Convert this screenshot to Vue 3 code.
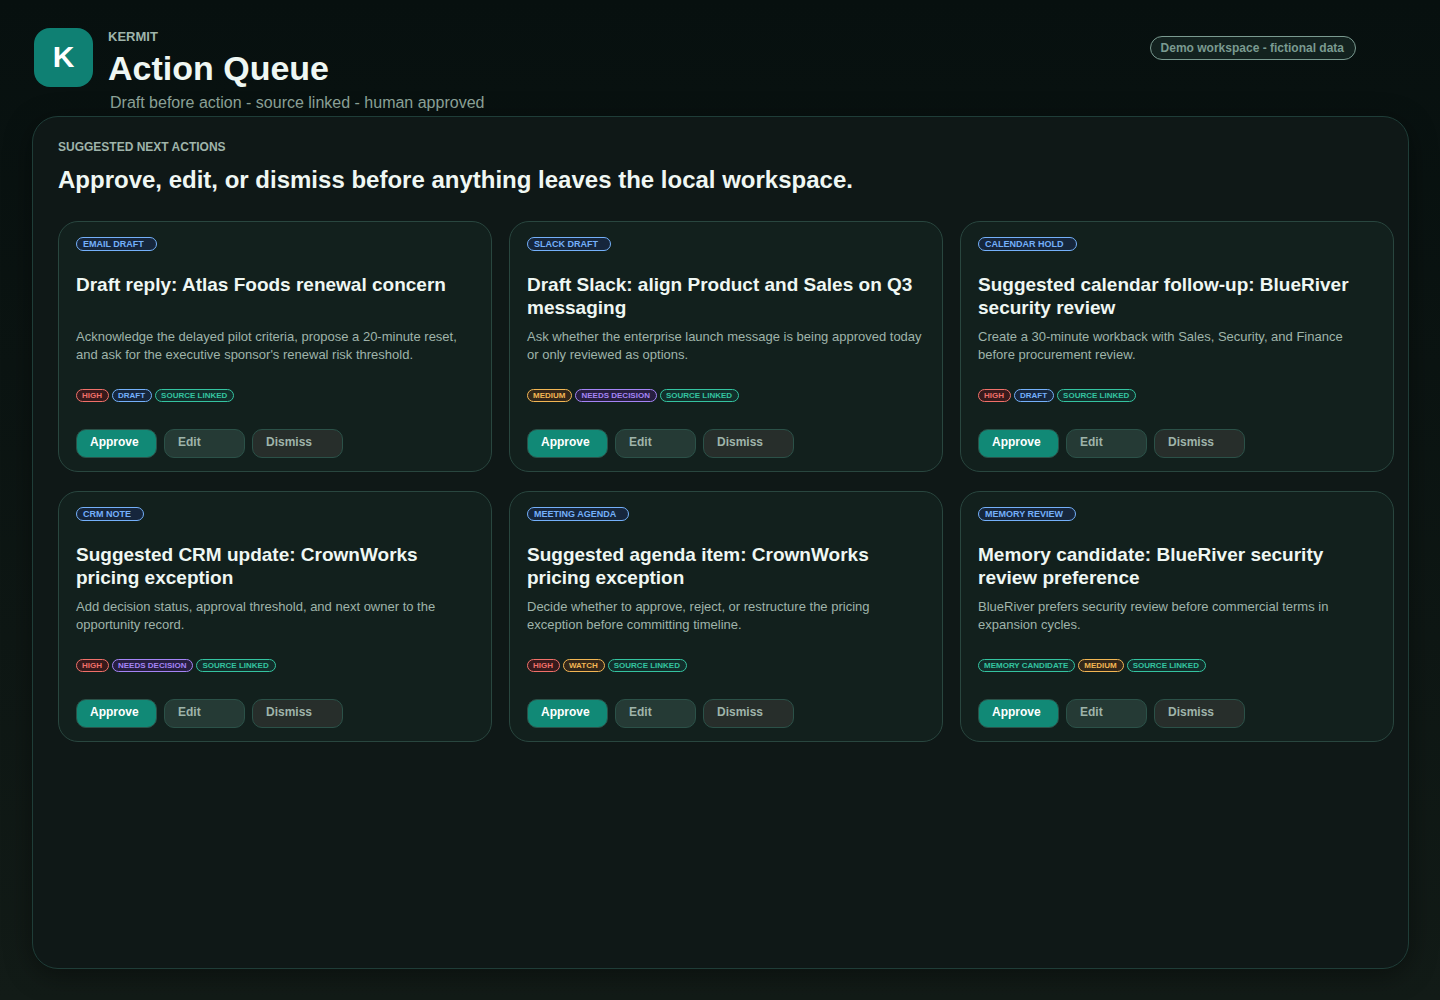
<template>
  <div class="page">
    <!-- Header -->
    <header class="header">
      <div class="logo">K</div>
      <div class="heading">
        <p class="brand">KERMIT</p>
        <h1 class="title">Action Queue</h1>
        <p class="subtitle">Draft before action - source linked - human approved</p>
      </div>
      <span class="workspace-badge">Demo workspace - fictional data</span>
    </header>

    <!-- Queue -->
    <main class="panel">
      <p class="eyebrow">SUGGESTED NEXT ACTIONS</p>
      <h2 class="panel-title">Approve, edit, or dismiss before anything leaves the local workspace.</h2>

      <div class="grid">
        <article v-for="action in actions" :key="action.title" class="card">
          <span class="kind">{{ action.kind }}</span>
          <h3 class="card-title">{{ action.title }}</h3>
          <p class="card-text">{{ action.text }}</p>
          <div class="tags">
            <span v-for="tag in action.tags" :key="tag" class="tag" :class="tagColors[tag]">{{ tag }}</span>
          </div>
          <div class="buttons">
            <button type="button" class="btn approve">Approve</button>
            <button type="button" class="btn edit">Edit</button>
            <button type="button" class="btn dismiss">Dismiss</button>
          </div>
        </article>
      </div>
    </main>
  </div>
</template>

<script setup>
const tagColors = {
  'HIGH': 'red',
  'DRAFT': 'blue',
  'SOURCE LINKED': 'green',
  'MEMORY CANDIDATE': 'green',
  'MEDIUM': 'amber',
  'WATCH': 'amber',
  'NEEDS DECISION': 'purple'
}

const actions = [
  {
    kind: 'EMAIL DRAFT',
    title: 'Draft reply: Atlas Foods renewal concern',
    text: "Acknowledge the delayed pilot criteria, propose a 20-minute reset, and ask for the executive sponsor's renewal risk threshold.",
    tags: ['HIGH', 'DRAFT', 'SOURCE LINKED']
  },
  {
    kind: 'SLACK DRAFT',
    title: 'Draft Slack: align Product and Sales on Q3 messaging',
    text: 'Ask whether the enterprise launch message is being approved today or only reviewed as options.',
    tags: ['MEDIUM', 'NEEDS DECISION', 'SOURCE LINKED']
  },
  {
    kind: 'CALENDAR HOLD',
    title: 'Suggested calendar follow-up: BlueRiver security review',
    text: 'Create a 30-minute workback with Sales, Security, and Finance before procurement review.',
    tags: ['HIGH', 'DRAFT', 'SOURCE LINKED']
  },
  {
    kind: 'CRM NOTE',
    title: 'Suggested CRM update: CrownWorks pricing exception',
    text: 'Add decision status, approval threshold, and next owner to the opportunity record.',
    tags: ['HIGH', 'NEEDS DECISION', 'SOURCE LINKED']
  },
  {
    kind: 'MEETING AGENDA',
    title: 'Suggested agenda item: CrownWorks pricing exception',
    text: 'Decide whether to approve, reject, or restructure the pricing exception before committing timeline.',
    tags: ['HIGH', 'WATCH', 'SOURCE LINKED']
  },
  {
    kind: 'MEMORY REVIEW',
    title: 'Memory candidate: BlueRiver security review preference',
    text: 'BlueRiver prefers security review before commercial terms in expansion cycles.',
    tags: ['MEMORY CANDIDATE', 'MEDIUM', 'SOURCE LINKED']
  }
]
</script>

<style>
body {
  margin: 0;
  background: #121b17;
}
</style>

<style scoped>
.page {
  min-height: 100vh;
  box-sizing: border-box;
  display: flex;
  flex-direction: column;
  padding: 28px 31px 31px 32px;
  background: linear-gradient(180deg, #07100f 0%, #121b17 100%);
  color: #eff7f3;
  font-family: "Liberation Sans", Arial, sans-serif;
}

h1,
h2,
h3,
p {
  margin: 0;
}

/* Header */
.header {
  display: flex;
  align-items: flex-start;
  padding: 0 53px 0 2px;
  margin-bottom: 3px;
}

.logo {
  width: 59px;
  height: 59px;
  border-radius: 16px;
  background: #0f8073;
  color: #fff;
  font-size: 30px;
  font-weight: 700;
  line-height: 58px;
  text-align: center;
  margin-right: 15px;
}

.heading {
  flex: 1;
}

.brand {
  font-size: 13px;
  line-height: 18px;
  font-weight: 700;
  color: #9fb4aa;
}

.title {
  margin-bottom: 3px;
  font-size: 34px;
  line-height: 44px;
  font-weight: 700;
}

.subtitle {
  font-size: 16px;
  line-height: 20px;
  padding-left: 2px;
  color: #8fa59b;
}

.workspace-badge {
  margin-top: 8px;
  padding: 0 11px 0 10px;
  border: 1px solid #7a9a90;
  border-radius: 12px;
  background: #13221f;
  color: #7a9a90;
  font-size: 12px;
  line-height: 22px;
  font-weight: 700;
}

/* Panel */
.panel {
  flex: 1;
  padding: 20px 14px 25px 25px;
  border: 1px solid #1f3d38;
  border-radius: 26px;
  background: #0f1817;
  box-shadow: 0 6px 28px rgba(0, 0, 0, 0.4);
}

.eyebrow {
  font-size: 12px;
  line-height: 20px;
  font-weight: 700;
  color: #9fb4aa;
}

.panel-title {
  margin: 8px 0 26px;
  font-size: 24px;
  line-height: 30px;
  font-weight: 700;
}

.grid {
  display: grid;
  grid-template-columns: repeat(3, 1fr);
  gap: 19px 17px;
}

/* Card */
.card {
  padding: 15px 17px 13px;
  border: 1px solid #29463f;
  border-radius: 20px;
  background: #12201d;
}

.kind {
  display: block;
  width: fit-content;
  padding: 1px 12px 0 6px;
  border: 1px solid #74b0fa;
  border-radius: 7px;
  background: #16263c;
  color: #74b0fa;
  font-size: 9px;
  line-height: 11px;
  font-weight: 700;
}

.card-title {
  min-height: 46px;
  margin: 22px 0 9px;
  font-size: 19px;
  line-height: 23px;
  font-weight: 700;
}

.card-text {
  min-height: 36px;
  font-size: 13px;
  line-height: 18px;
  color: #9fb4aa;
}

.tags {
  display: flex;
  gap: 3px;
  margin: 25px 0 27px;
}

.tag {
  padding: 1px 6px 0 5px;
  border: 1px solid currentColor;
  border-radius: 7px;
  font-size: 8px;
  line-height: 10px;
  font-weight: 700;
}

.red {
  color: #f07069;
  background: #371a1c;
}

.blue {
  color: #74b0fa;
  background: #16263c;
}

.green {
  color: #34c3a0;
  background: #122e2b;
}

.amber {
  color: #f2b654;
  background: #33271a;
}

.purple {
  color: #a484f5;
  background: #271e40;
}

.buttons {
  display: flex;
  gap: 7px;
}

.btn {
  min-width: 81px;
  margin: 0;
  padding: 0 30px 3px 13px;
  border: 1px solid #2b5148;
  border-radius: 10px;
  color: #9fb4aa;
  font-family: inherit;
  font-size: 12px;
  line-height: 24px;
  font-weight: 700;
  text-align: left;
  cursor: pointer;
}

.approve {
  padding-right: 17px;
  background: #118976;
  color: #fff;
}

.edit {
  background: #253a35;
}

.dismiss {
  background: #272e2b;
}

.btn:hover {
  filter: brightness(1.15);
}
</style>
